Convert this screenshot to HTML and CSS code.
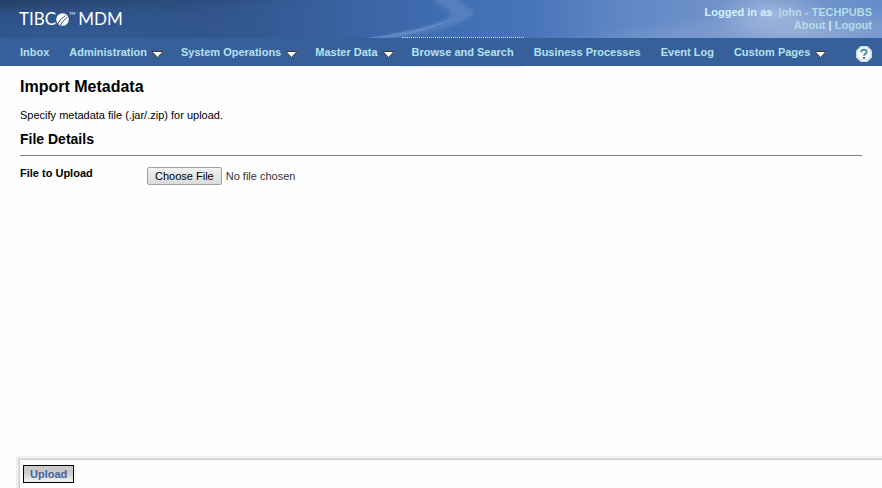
FILE: index.html
```html
<!DOCTYPE html>
<html lang="en">
<head>
<meta charset="utf-8">
<meta name="viewport" content="width=device-width, initial-scale=1">
<title>Import Metadata</title>
<link rel="stylesheet" href="styles.css">
</head>
<body>
<header class="banner">
  <svg class="sky" viewBox="0 0 882 38" preserveAspectRatio="none" aria-hidden="true">
    <defs>
      <linearGradient id="base" x1="0" x2="1" y1="0" y2="0">
        <stop offset="0" stop-color="#2f548c"/>
        <stop offset=".25" stop-color="#32568d"/>
        <stop offset=".38" stop-color="#38619f"/>
        <stop offset=".5" stop-color="#3f6db2"/>
        <stop offset=".6" stop-color="#4874ba"/>
        <stop offset=".7" stop-color="#5f86c4"/>
        <stop offset=".86" stop-color="#7797cd"/>
        <stop offset="1" stop-color="#668dc9"/>
      </linearGradient>
      <linearGradient id="shade" x1="0" x2="1" y1="0" y2="0">
        <stop offset="0" stop-color="#1e3655" stop-opacity=".85"/>
        <stop offset="1" stop-color="#2c4d7d" stop-opacity=".4"/>
      </linearGradient>
      <radialGradient id="cloud">
        <stop offset="0" stop-color="#b0c2e2" stop-opacity=".75"/>
        <stop offset="1" stop-color="#9db5dc" stop-opacity="0"/>
      </radialGradient>
      <filter id="soft" x="-10%" y="-30%" width="120%" height="160%"><feGaussianBlur stdDeviation="2"/></filter>
      <filter id="haze" x="-20%" y="-80%" width="140%" height="260%"><feGaussianBlur stdDeviation="6"/></filter>
    </defs>
    <rect width="882" height="38" fill="url(#base)"/>
    <path d="M-20 -10H320Q240 10 150 7T-20 10Z" fill="url(#shade)" filter="url(#haze)"/>
    <path d="M0 34Q60 26 130 32T210 38H0Z" fill="#3a63a0" opacity=".5" filter="url(#haze)"/>
    <path d="M428 -4H452Q466 6 474 12Q472 20 446 28Q410 38 366 40Q420 31 444 21Q456 14 446 8Z" fill="#6389c6" opacity=".65" filter="url(#soft)"/>
    <path d="M366 38Q425 30 453 18Q430 32 388 38Z" fill="#6a90ca" opacity=".7"/>
    <path d="M560 44Q650 32 700 22T780 10L900 16V44Z" fill="#84a1d2" opacity=".5" filter="url(#haze)"/>
    <ellipse cx="772" cy="14" rx="60" ry="26" fill="url(#cloud)"/>
    <ellipse cx="800" cy="32" rx="100" ry="24" fill="url(#cloud)" opacity=".6"/>
  </svg>
  <div class="logo">
    <span>TIBC</span>
    <svg class="globe" viewBox="0 0 13 13" aria-hidden="true">
      <circle cx="6.5" cy="6.5" r="6.3" fill="#fff"/>
      <path d="M1.500 11.500Q3 6.500 9.500 2.500M4 12.700Q6 8.500 11.300 4" fill="none" stroke="#31558b" stroke-width="1"/>
    </svg>
    <span class="tm">TM</span>
    <span>MDM</span>
  </div>
  <div class="session">
    <div>Logged in as &nbsp;<span class="user">john - TECHPUBS</span></div>
    <div><a href="#about">About</a> | <a href="#logout">Logout</a></div>
  </div>
</header>
<nav class="menu">
  <a href="#inbox">Inbox</a>
  <a href="#administration">Administration<svg class="arrow" viewBox="0 0 11 7" aria-hidden="true"><path d="M0 .5H11L5.500 6.500Z"/></svg></a>
  <a href="#system">System Operations<svg class="arrow" viewBox="0 0 11 7" aria-hidden="true"><path d="M0 .5H11L5.500 6.500Z"/></svg></a>
  <a href="#master">Master Data<svg class="arrow" viewBox="0 0 11 7" aria-hidden="true"><path d="M0 .5H11L5.500 6.500Z"/></svg></a>
  <a class="current" href="#browse">Browse and Search</a>
  <a href="#processes">Business Processes</a>
  <a href="#events">Event Log</a>
  <a href="#custom">Custom Pages<svg class="arrow" viewBox="0 0 11 7" aria-hidden="true"><path d="M0 .5H11L5.500 6.500Z"/></svg></a>
  <a class="help" href="#help" aria-label="Help"><svg viewBox="0 0 16 16" aria-hidden="true">
    <path d="M4.500 0H11.500L16 4.500V11.500L11.500 16H4.500L0 11.500V4.500Z" fill="#c5dce6"/>
    <circle cx="8" cy="8" r="6.800" fill="#fbfcfd"/>
    <path d="M5.300 6.200Q5.300 3.700 8 3.700T10.700 6Q10.700 7.300 9 8.100Q8 8.600 8 9.800" fill="none" stroke="#4386a6" stroke-width="1.800"/>
    <rect x="7" y="11" width="2" height="2" fill="#4386a6"/>
  </svg></a>
</nav>
<main class="content">
  <h1>Import Metadata</h1>
  <p>Specify metadata file (.jar/.zip) for upload.</p>
  <h2>File Details</h2>
  <form class="row" id="import">
    <label for="file">File to Upload</label>
    <input type="file" id="file">
  </form>
</main>
<footer class="actions">
  <button type="submit" form="import">Upload</button>
</footer>
</body>
</html>
```
FILE: styles.css
```css
* { box-sizing: border-box; }

body {
  margin: 0;
  min-height: 100vh;
  display: flex;
  flex-direction: column;
  background: #fefefe;
  color: #000;
  font: 11px/13px "Liberation Sans", Arial, sans-serif;
}

a { color: inherit; text-decoration: none; }

.banner {
  position: relative;
  display: flex;
  justify-content: space-between;
  height: 38px;
  padding: 6px 10px 0 19px;
  background: #38609c;
}

.sky {
  position: absolute;
  inset: 0;
  width: 100%;
  height: 100%;
}

.logo {
  position: relative;
  display: flex;
  align-items: center;
  height: 26px;
  color: #fff;
  font: 17px/26px Lato, sans-serif;
}

.globe { width: 13px; height: 13px; }

.tm {
  align-self: flex-start;
  margin: 5px 3px 0 0;
  font-size: 4px;
  line-height: 6px;
}

.session {
  position: relative;
  color: #d3f1fb;
  font-weight: bold;
  text-align: right;
}

.session a, .user { color: #b5dde8; }

.menu {
  position: relative;
  display: flex;
  height: 28px;
  padding: 0 10px;
  background: #375f99;
  color: #b5e1f0;
  font-weight: bold;
}

.menu a {
  display: flex;
  align-items: center;
  padding: 0 10px;
  white-space: nowrap;
}

.menu .current {
  margin: -1px 0;
  border: dotted #b5e1f0;
  border-width: 1px 0;
}

.arrow {
  width: 11px;
  height: 7px;
  margin: 4px -2px 0 5px;
  fill: #fff;
  stroke: #443a30;
  stroke-width: 1px;
}

.menu .help {
  margin-left: auto;
  padding: 4px 0 0;
}

.help svg { width: 16px; height: 16px; }

.content {
  flex: 1;
  padding: 12px 20px;
}

h1, h2, p { margin: 0; }

h1 { font-size: 16px; line-height: 18px; }

p { margin: 13px 0 9px; }

h2 {
  padding-bottom: 8px;
  border-bottom: 1px solid #808080;
  font-size: 14px;
  line-height: 16px;
}

.row {
  display: flex;
  align-items: flex-start;
  padding-top: 11px;
}

.row label {
  width: 127px;
  font-weight: bold;
}

input[type="file"] {
  color: #333;
  font: inherit;
}

input::file-selector-button {
  height: 18px;
  margin: 0 4px 0 0;
  padding: 0 7px;
  border: 1px solid #a0a0a0;
  border-radius: 2px;
  background: linear-gradient(#f2f2f2, #dcdcdc);
  color: #000;
  font: inherit;
}

.actions {
  height: 29px;
  margin-left: 19px;
  padding: 5px 0 0 3px;
  border: solid #d0d0d0;
  border-width: 1px 0 0 1px;
  box-shadow: 0 0 0 1px #e0e0e0, 0 0 0 3px #efefef;
}

.actions button {
  height: 18px;
  padding: 0 6px;
  border: 1px solid #000;
  background: linear-gradient(#cbcbcb 40%, #f4f4f4);
  color: #44659c;
  font: bold 11px/16px "Liberation Sans", Arial, sans-serif;
}
```
